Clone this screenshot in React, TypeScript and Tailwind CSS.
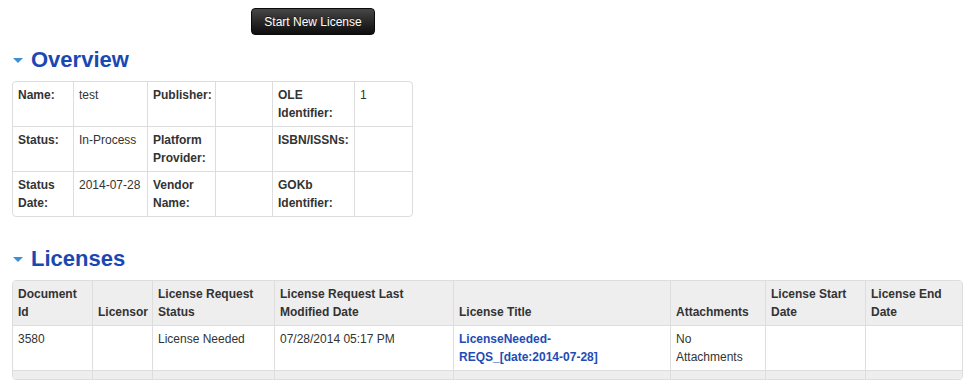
import React from 'react';

const cell = 'px-[5px] py-[4px] align-top text-left';

function SectionTitle({ label }: { label: string }) {
  return (
    <div className="flex items-center h-[24px]">
      <span className="ml-[1px] w-0 h-0 border-l-[5px] border-r-[5px] border-t-[5px] border-l-transparent border-r-transparent border-t-[#3a8fd6]" />
      <h2 className="ml-[8px] text-[22px] leading-[24px] font-bold text-[#1a48b2]">{label}</h2>
    </div>
  );
}

const overviewRows = [
  [['Name:', 'test'], ['Publisher:', ''], ['OLE Identifier:', '1']],
  [['Status:', 'In-Process'], ['Platform Provider:', ''], ['ISBN/ISSNs:', '']],
  [['Status Date:', '2014-07-28'], ['Vendor Name:', ''], ['GOKb Identifier:', '']],
];

const licenseHeads = [
  'Document Id',
  'Licensor',
  'License Request Status',
  'License Request Last Modified Date',
  'License Title',
  'Attachments',
  'License Start Date',
  'License End Date',
];

export default function App() {
  return (
    <div className="min-h-[389px] bg-white pl-[12px] pt-[8px] text-[12px] leading-[18px] text-[#333] font-['Liberation_Sans',Arial,sans-serif]">
      {/* top action */}
      <button className="ml-[239px] w-[124px] h-[27px] rounded-[4px] border border-[#0a0a0a] bg-linear-to-b from-[#474747] to-[#0e0e0e] text-white text-[12px] [text-shadow:0_-1px_0_rgba(0,0,0,0.4)]">
        Start New License
      </button>

      {/* overview */}
      <div className="mt-[13px]">
        <SectionTitle label="Overview" />
      </div>
      <div className="mt-[9px] w-[401px] border border-[#ddd] rounded-[4px] overflow-hidden">
        <table className="w-full table-fixed border-separate border-spacing-0">
          <colgroup>
            <col className="w-[60px]" />
            <col className="w-[74px]" />
            <col className="w-[68px]" />
            <col className="w-[57px]" />
            <col className="w-[82px]" />
            <col className="w-[58px]" />
          </colgroup>
          <tbody>
            {overviewRows.map((row, ri) => (
              <tr key={ri} className="h-[44px]">
                {row.map(([label, value], ci) => (
                  <React.Fragment key={ci}>
                    <th
                      className={`${cell} font-bold ${ci > 0 ? 'border-l border-[#ddd]' : ''} ${ri > 0 ? 'border-t border-[#ddd]' : ''} ${label === 'ISBN/ISSNs:' ? 'whitespace-nowrap' : ''}`}
                    >
                      {label}
                    </th>
                    <td className={`${cell} whitespace-nowrap border-l border-[#ddd] ${ri > 0 ? 'border-t' : ''}`}>{value}</td>
                  </React.Fragment>
                ))}
              </tr>
            ))}
          </tbody>
        </table>
      </div>

      {/* licenses */}
      <div className="mt-[30px]">
        <SectionTitle label="Licenses" />
      </div>
      <div className="mt-[9px] w-[951px] border border-[#ddd] rounded-[4px] overflow-hidden">
        <table className="w-full table-fixed border-separate border-spacing-0">
          <colgroup>
            <col className="w-[79px]" />
            <col className="w-[60px]" />
            <col className="w-[122px]" />
            <col className="w-[179px]" />
            <col className="w-[217px]" />
            <col className="w-[95px]" />
            <col className="w-[100px]" />
            <col className="w-[97px]" />
          </colgroup>
          <thead>
            <tr className="h-[44px] bg-[#eeeeee]">
              {licenseHeads.map((h, i) => (
                <th
                  key={h}
                  className={`px-[5px] py-[4px] align-bottom text-left font-bold ${i > 0 ? 'border-l border-[#ddd]' : ''} ${h === 'Licensor' ? 'whitespace-nowrap' : ''}`}
                >
                  {h}
                </th>
              ))}
            </tr>
          </thead>
          <tbody>
            <tr className="h-[45px]">
              <td className={`${cell} border-t border-[#ddd]`}>3580</td>
              <td className={`${cell} border-t border-l border-[#ddd]`}></td>
              <td className={`${cell} border-t border-l border-[#ddd]`}>License Needed</td>
              <td className={`${cell} border-t border-l border-[#ddd]`}>07/28/2014 05:17 PM</td>
              <td className={`${cell} border-t border-l border-[#ddd]`}>
                <a href="#" className="font-bold text-[#1e4cb4]">
                  LicenseNeeded-
                  <br />
                  REQS_[date:2014-07-28]
                </a>
              </td>
              <td className={`${cell} border-t border-l border-[#ddd]`}>No Attachments</td>
              <td className={`${cell} border-t border-l border-[#ddd]`}></td>
              <td className={`${cell} border-t border-l border-[#ddd]`}></td>
            </tr>
            <tr className="h-[9px] bg-[#eeeeee]">
              {licenseHeads.map((h, i) => (
                <td key={h} className={`px-[5px] py-[4px] border-t border-[#ddd] ${i > 0 ? 'border-l' : ''}`}></td>
              ))}
            </tr>
          </tbody>
        </table>
      </div>
    </div>
  );
}
